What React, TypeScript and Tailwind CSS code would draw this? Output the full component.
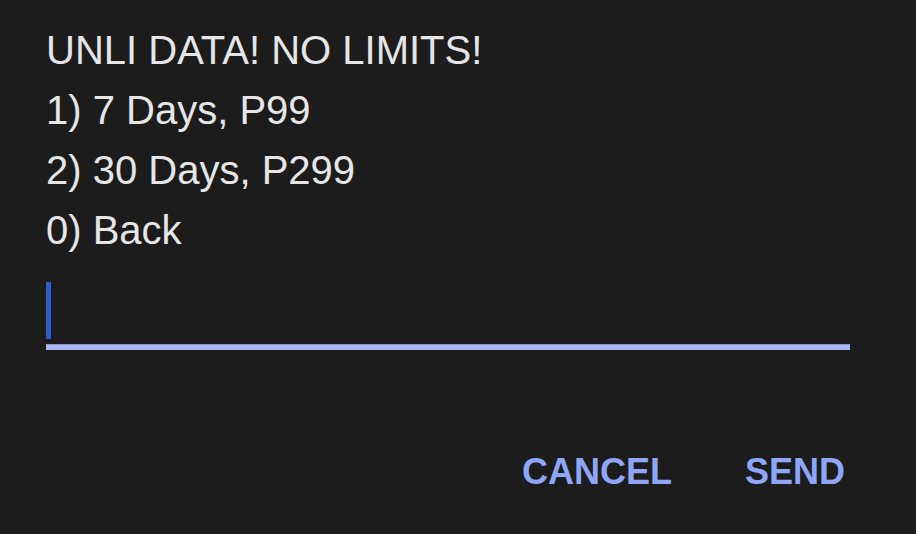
export default function App() {
  const lines = ['UNLI DATA! NO LIMITS!', '1) 7 Days, P99', '2) 30 Days, P299', '0) Back']
  return (
    <main className="w-[916px] h-[534px] bg-[#1c1c1c] overflow-hidden font-['Liberation_Sans',Arial,sans-serif]">
      <div className="pt-5 pl-[46px] pr-[66px]">
        <div className="text-[40px] leading-[60px] text-[#e6e6e6]">
          {lines.map((l) => (
            <div key={l}>{l}</div>
          ))}
        </div>
        <div className="mt-[22px]">
          <div className="h-[57px] flex items-stretch">
            <div className="w-[5px] bg-[#2d5bd0]" />
          </div>
          <div className="mt-[5px] h-[6px] bg-[#aab6f6] border-t border-[#8a94c8]" />
        </div>
      </div>
      <div className="mt-[104px] flex justify-end gap-[73px] pr-[71px] text-[36px] leading-[36px] font-bold text-[#8fa6f7]">
        <button>CANCEL</button>
        <button>SEND</button>
      </div>
    </main>
  )
}
